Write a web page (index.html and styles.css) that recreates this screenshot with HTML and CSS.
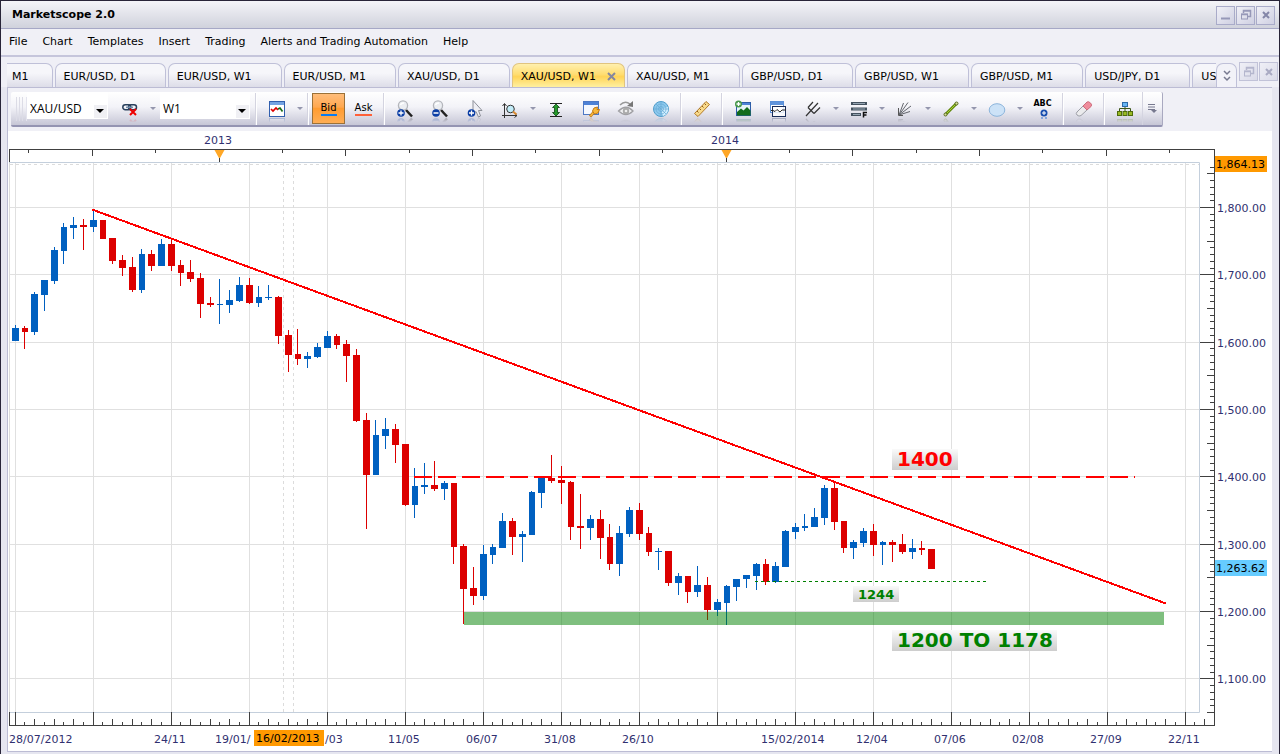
FILE: index.html
```html
<!DOCTYPE html>
<html lang="en">
<head>
<meta charset="utf-8">
<title>Marketscope 2.0</title>
<link rel="stylesheet" href="styles.css">
</head>
<body>
<div class="window">
  <header class="titlebar">
    <h1 class="title">Marketscope 2.0</h1>
    <div class="winbtns">
      <button class="winbtn" aria-label="Minimize"><svg width="12" height="12"><path d="M1 9.500H10" stroke="#9698b8" stroke-width="2"/></svg></button>
      <button class="winbtn" aria-label="Restore"><svg width="12" height="12"><path d="M3.500 4V1.500H10.500V7.500H8M3 2H11M1 5.500H8" fill="none" stroke="#9698b8" stroke-width="1.500"/><rect x="1.500" y="5" width="6" height="5" fill="none" stroke="#9698b8"/></svg></button>
      <button class="winbtn" aria-label="Close"><svg width="12" height="12"><path d="M3 3L9 9M9 3L3 9" stroke="#8486a8" stroke-width="2"/></svg></button>
    </div>
  </header>
  <nav class="menubar">
    <button>File</button><button>Chart</button><button>Templates</button><button>Insert</button><button>Trading</button><button>Alerts and Trading Automation</button><button>Help</button>
  </nav>
  <div class="tabrow">
    <div class="tabs">
      <button class="tab first">M1</button>
      <button class="tab">EUR/USD, D1</button>
      <button class="tab">EUR/USD, W1</button>
      <button class="tab">EUR/USD, M1</button>
      <button class="tab">XAU/USD, D1</button>
      <button class="tab active">XAU/USD, W1<svg class="tabx" width="9" height="9"><path d="M1 1L8 8M8 1L1 8" stroke="#8587a0" stroke-width="2"/></svg></button>
      <button class="tab">XAU/USD, M1</button>
      <button class="tab">GBP/USD, D1</button>
      <button class="tab">GBP/USD, W1</button>
      <button class="tab">GBP/USD, M1</button>
      <button class="tab">USD/JPY, D1</button>
      <button class="tab partial">US</button>
    </div>
    <button class="tab more" aria-label="More tabs"><svg width="10" height="12"><path d="M2 1L5 4L8 1M2 7L5 10L8 7" fill="none" stroke="#77798f" stroke-width="1.500"/></svg></button>
    <div class="winbtns faded">
      <button class="winbtn" aria-label="Restore chart"><svg width="12" height="12"><path d="M3.500 4V1.500H10.500V7.500H8M3 2H11M1 5.500H8" fill="none" stroke="#9698b8" stroke-width="1.500"/><rect x="1.500" y="5" width="6" height="5" fill="none" stroke="#9698b8"/></svg></button>
      <button class="winbtn" aria-label="Close chart"><svg width="12" height="12"><path d="M3 3L9 9M9 3L3 9" stroke="#8486a8" stroke-width="2"/></svg></button>
    </div>
  </div>
  <main class="content">
    <div class="toolstrip">
      <div class="toolbar">
        <span class="grip"></span>
        <label class="combo symbol"><select aria-label="Symbol"><option>XAU/USD</option></select></label>
        <button class="tool linkbtn" aria-label="Unlink"><svg width="18" height="18" class="refl"><g fill="none" stroke="#28405c" stroke-width="1.500"><rect x="1.800" y="4.800" width="8" height="5" rx="2.500"/><rect x="7.500" y="4.800" width="8" height="5" rx="2.500"/><path d="M5 7.300H12" stroke="#6f8aa8"/></g><path d="M9 9L15 15M15 9L9 15" stroke="#e00" stroke-width="2"/></svg></button>
        <button class="caret" aria-label="Link options"></button>
        <label class="combo period"><select aria-label="Period"><option>W1</option></select></label>
        <span class="sep"></span>
        <button class="tool" aria-label="Chart type"><svg width="18" height="18" class="refl"><rect x="1.500" y="1.500" width="15" height="15" fill="#fff" stroke="#315fae"/><rect x="2" y="2" width="14" height="3" fill="#74a3e2"/><path d="M3 9L5 11L8 8L10 10" fill="none" stroke="#d00" stroke-width="1.700"/><path d="M10 9L12 8L14.500 11.500" fill="none" stroke="#176a17" stroke-width="1.700"/></svg></button>
        <button class="caret" aria-label="Chart type options"></button>
        <span class="sep"></span>
        <button class="price bid on"><span>Bid</span></button>
        <button class="price ask"><span>Ask</span></button>
        <span class="sep"></span>
        <button class="tool" aria-label="Zoom in"><svg width="18" height="18" class="refl"><path d="M10 10L16 16.500" stroke="#222" stroke-width="2.500"/><circle cx="7" cy="5.500" r="4.600" fill="#eceef2" stroke="#b4b6bc" stroke-width="1.300"/><path d="M4.500 5Q5 3 8 3" stroke="#fff" stroke-width="1.500" fill="none"/><circle cx="5" cy="13" r="3.800" fill="#0b3ea5"/><path d="M2.500 13H7.500M5 10.500V15.500" stroke="#fff" stroke-width="1.300"/></svg></button>
        <button class="tool" aria-label="Zoom out"><svg width="18" height="18" class="refl"><path d="M10 10L16 16.500" stroke="#222" stroke-width="2.500"/><circle cx="7" cy="5.500" r="4.600" fill="#eceef2" stroke="#b4b6bc" stroke-width="1.300"/><path d="M4.500 5Q5 3 8 3" stroke="#fff" stroke-width="1.500" fill="none"/><circle cx="5" cy="13" r="3.800" fill="#0b3ea5"/><path d="M2.500 13H7.500" stroke="#fff" stroke-width="1.500"/></svg></button>
        <button class="tool" aria-label="Zoom cursor"><svg width="18" height="18" class="refl"><path d="M7 .5V14L10 11.500L12.500 17L14.500 16L12.500 10.500H16Z" fill="#eeeef3" stroke="#8d9099"/><circle cx="5.500" cy="13" r="3.800" fill="#0b3ea5"/><path d="M3 13H8M5.500 10.500V15.500" stroke="#fff" stroke-width="1.300"/></svg></button>
        <button class="tool" aria-label="Scale chart"><svg width="18" height="18"><path d="M3.500 4V15.500H16M1.500 6L3.500 3.500L5.500 6M13.500 13.500L16 15.500L13.500 17.500M1 15.500H3M3.500 15V18" stroke="#333" fill="none"/><circle cx="9.500" cy="9" r="3.800" fill="#c2ecf8" stroke="#333"/><path d="M12 11.500L15.500 14.500" stroke="#d88c34" stroke-width="2"/></svg></button>
        <button class="caret" aria-label="Scale options"></button>
        <button class="tool" aria-label="Fit height"><svg width="18" height="18"><path d="M3 3.500H15M3 16.500H15" stroke="#222"/><path d="M9 4L12.500 7.500H10.500V12.500H12.500L9 16L5.500 12.500H7.500V7.500H5.500Z" fill="#259a2b" stroke="#0a4210" stroke-width=".8"/></svg></button>
        <button class="tool" aria-label="Chart properties"><svg width="18" height="18" class="refl"><rect x="1.500" y="1.500" width="15" height="13" fill="#f5f8fe" stroke="#4d78c4"/><rect x="2" y="2" width="14" height="3" fill="#4e82d6"/><path d="M8 16.500L12 12" stroke="#c17a16" stroke-width="2.800"/><path d="M8.500 16L12 12" stroke="#f9b93b" stroke-width="1.500"/><path d="M10.500 11L12 8L15.500 7L15 9.500H17.500L16 13L12.500 14Z" fill="#f9b93b" stroke="#c17a16"/></svg></button>
        <button class="tool" aria-label="Show hidden"><svg width="18" height="18" class="refl"><path d="M1.500 11Q9 3.500 16 11Q9 18 1.500 11Z" fill="#f0f0f2" stroke="#a0a0a4" stroke-width="1.300"/><circle cx="9" cy="11" r="3.200" fill="#aaa"/><circle cx="9" cy="11" r="1.300" fill="#eee"/><path d="M3 5Q8 0 13 4" stroke="#999" fill="none" stroke-width="1.500"/><path d="M16 1V7L10 6Z" fill="#777"/></svg></button>
        <button class="tool" aria-label="Market radar"><svg width="18" height="18" class="refl"><circle cx="9" cy="9" r="7.500" fill="#8cc8ed" stroke="#4f9cca"/><path d="M9 9L16 7A7.500 7.500 0 0 1 11 16Z" fill="#d2efff"/><g fill="none" stroke="#67aad4" stroke-width=".7"><circle cx="9" cy="9" r="5"/><circle cx="9" cy="9" r="2.500"/><path d="M9 1.500V16.500M1.500 9H16.500M4 4L14 14"/></g></svg></button>
        <span class="sep"></span>
        <button class="tool" aria-label="Ruler"><svg width="18" height="18" class="refl"><path d="M1.500 13.500L13 1.500L16.500 4.500L5 16.500Z" fill="#f8da8c" stroke="#b27a28"/><path d="M4 11L5.500 12.500M6.500 8.500L8 10M9 6L10.500 7.500M11.500 3.500L13 5" stroke="#925e19"/></svg></button>
        <span class="sep"></span>
        <button class="tool" aria-label="Add image"><svg width="18" height="18" class="refl"><rect x="2.500" y="2.500" width="14" height="13" fill="#e5f4f8" stroke="#2c5da8"/><path d="M3 3H16V5H3Z" fill="#4e82d6"/><path d="M3 15.500V12L7 8.500L9.500 10.500L13 7L16.500 10.500V15.500Z" fill="#126b1b"/><circle cx="4.500" cy="4" r="3.500" fill="#46974a"/><path d="M2.500 4H6.500M4.500 2V6" stroke="#fff" stroke-width="1.300"/></svg></button>
        <button class="tool" aria-label="Add indicator"><svg width="18" height="18" class="refl"><rect x="1.500" y="1.500" width="13" height="11" fill="#fff" stroke="#5b91d9"/><rect x="2" y="2" width="12" height="3" fill="#5f94dc"/><rect x="3.500" y="6.500" width="13" height="10" fill="#fff" fill-opacity=".8" stroke="#172b58"/><path d="M2 10.500H4L6 11.500L8 9.500L11 12L13 10H17" fill="none" stroke="#222"/></svg></button>
        <button class="tool" aria-label="Pitchfork"><svg width="18" height="18" class="refl"><path d="M2 16L7 10.500L14 3M4 7.500L10 13.500M4 7.500L9 2M10 13.500L16 7.500" stroke="#333" fill="none" stroke-width="1.200"/></svg></button>
        <button class="caret" aria-label="Pitchfork options"></button>
        <button class="tool" aria-label="Fibonacci"><svg width="18" height="18"><path d="M1 3.500H17M1 9H17M1 14.500H11" stroke="#44525f" stroke-width="3"/><path d="M3 3.500H15M3 9H15M3 14.500H10" stroke="#95a5b2"/><path d="M13.500 17.500V12.500H17M13.500 15H16.500" stroke="#111" fill="none" stroke-width="1.500"/></svg></button>
        <button class="caret" aria-label="Fibonacci options"></button>
        <button class="tool" aria-label="Fan"><svg width="18" height="18" class="refl"><path d="M3 15L7.500 3M3 15L12 2.500M3 15L15 6M3 15L14 11.500" stroke="#62656b" fill="none"/><path d="M2.500 8V15.500H7" stroke="#555" fill="none"/></svg></button>
        <button class="caret" aria-label="Fan options"></button>
        <button class="tool" aria-label="Line"><svg width="18" height="18" class="refl"><path d="M3.500 14.500L14.500 3.500" stroke="#628a0b" stroke-width="3"/><path d="M3.500 14.500L14.500 3.500" stroke="#a9cf38"/><circle cx="3.500" cy="14.500" r="1.500" fill="#d7df9c" stroke="#56681c"/><circle cx="14.500" cy="3.500" r="1.500" fill="#d7df9c" stroke="#56681c"/></svg></button>
        <button class="caret" aria-label="Line options"></button>
        <button class="tool" aria-label="Ellipse"><svg width="18" height="18"><ellipse cx="9" cy="10" rx="7.800" ry="6.300" fill="#cce2f7" stroke="#8bb4db"/></svg></button>
        <button class="caret" aria-label="Ellipse options"></button>
        <button class="tool label" aria-label="Text label"><b>ABC</b><svg width="12" height="12"><circle cx="8" cy="5" r="3.500" fill="#174eae"/><path d="M6 5H10M8 3V7" stroke="#fff"/><path d="M6 11V9M10 11V9" stroke="#85a7dc" stroke-width="2"/></svg></button>
        <span class="sep"></span>
        <button class="tool" aria-label="Erase"><svg width="18" height="18" class="refl"><path d="M2 12L8 6L12 10L6 15.500Q4 17 2 15Q.5 13.500 2 12Z" fill="#ebebed" stroke="#9b9da5"/><path d="M8 6L12 2Q13.500 1 15.500 3Q17.500 5 16 6.500L12 10Z" fill="#ef8c9c" stroke="#cc6c7c"/></svg></button>
        <span class="sep"></span>
        <button class="tool" aria-label="Object tree"><svg width="18" height="18" class="refl"><path d="M9 6V9M3.500 11V8.500H14.500V11M9 8V12" stroke="#3e5818" fill="none"/><rect x="6.500" y="2.500" width="5" height="4" fill="#68b6f5" stroke="#2e6ba9"/><g fill="#9aba24" stroke="#4f6c0d"><rect x="1.500" y="11.500" width="4" height="4"/><rect x="7" y="11.500" width="4" height="4"/><rect x="12.500" y="11.500" width="4" height="4"/></g></svg></button>
        <button class="overflow" aria-label="Toolbar options"><svg width="12" height="12"><path d="M1 1.500H8M1 4H8M1 6.500H8" stroke="#77798f"/><path d="M4 7H10L7 10Z" fill="#77798f"/></svg></button>
      </div>
    </div>
    <svg id="chart" class="chart" viewBox="8 131 1264 620" role="img" aria-label="XAU/USD weekly candlestick chart">
      <defs><linearGradient id="tag" x1="0" y1="0" x2="0" y2="1"><stop offset="0" stop-color="#fafafa"/><stop offset="1" stop-color="#cdcdcd"/></linearGradient></defs>
      <g id="grid" class="grid"></g>
      <path class="cursor" d="M283.500 163V712M293.500 163V712M10 164.500H1199"/>
      <path class="frame" d="M9 162.500H1199.500V712.500H9"/>
      <path class="edge" d="M9.500 163V712"/>
      <path class="axis" d="M9.500 162V149.500H1214.500V725.500H9.500V712"/>
      <path id="ticks" class="axis"></path>
      <path class="marker" d="M214.500 150H224.500L219.500 159ZM721.500 150H731.500L726.500 159Z"/>
      <path class="axis" d="M219.500 158V162M726.500 158V162"/>
      <g id="candles" class="candles"></g>
      <rect class="zone" x="464" y="612" width="700" height="13"/>
      <path class="resistance" d="M414 477H1135"/>
      <path class="support" d="M755 581.500H986"/>
      <path class="trend" d="M92 209.500L1166 603.500"/>
      <g class="tagbox"><rect x="892" y="449" width="66" height="21"/><rect x="853" y="586" width="46" height="16"/><rect x="892" y="630" width="165" height="21"/></g>
      <text class="tag red" x="897" y="466">1400</text>
      <text class="tag small" x="858" y="599">1244</text>
      <text class="tag" x="897" y="647">1200 TO 1178</text>
      <g id="labels" class="labels"></g>
      <rect class="hot" x="254" y="730" width="70" height="16"/><text class="hottext" x="256" y="742">16/02/2013</text>
      <rect class="hot" x="1215" y="156" width="52" height="16"/><text class="hottext" x="1216" y="168">1,864.13</text>
      <rect class="last" x="1215" y="560" width="52" height="16"/><text class="hottext" x="1216" y="572">1,263.62</text>
    </svg>
  </main>
</div>
<script src="chart.js"></script>
</body>
</html>
```
FILE: styles.css
```css
* { box-sizing: border-box; }
body { margin: 0; background: #f0f0f6; color: #000; font: 11px/14px "DejaVu Sans", Verdana, sans-serif; }
button { margin: 0; padding: 0; border: 0; background: none; font: inherit; color: inherit; }
svg { display: block; }
.window { min-height: 100vh; border: 1px solid #282438; border-bottom: 0; background: #e6e6f0; display: flex; flex-direction: column; }
.titlebar { display: flex; align-items: center; justify-content: space-between; height: 28px; padding: 1px 4px 0 11px; background: linear-gradient(#f4f4f8, #d0d2dc); border-bottom: 1px solid #a6a8c6; }
.title { margin: 0; font-size: 11px; line-height: 14px; font-weight: bold; }
.winbtns { display: flex; gap: 1px; }
.winbtn { width: 19px; height: 19px; display: grid; place-items: center; border: 1px solid #a9abc9; background: linear-gradient(135deg, #f0f0f7, #cfd0e2); }
.menubar { display: flex; align-items: center; gap: 15px; height: 28px; padding: 0 8px 1px; background: #f0f0f6; border-bottom: 2px solid #c5c5db; }
.tabrow { display: flex; align-items: flex-end; height: 30px; padding-left: 6px; background: #efeff6; }
.tabs { flex: 1; min-width: 0; overflow: hidden; display: flex; gap: 2px; height: 24px; }
.tab { flex: none; display: flex; align-items: center; height: 24px; padding: 2px 29px 0 8px; border: 1px solid #bfc0d8; border-bottom: 0; border-radius: 7px 7px 0 0; background: linear-gradient(#f6f6fa 40%, #dddde8); white-space: nowrap; }
.tab.first { border-left: 0; border-radius: 0 7px 0 0; padding: 2px 23px 0 5px; }
.tab.active { padding-right: 8px; border-color: #e0c480; background: linear-gradient(#fff0ae, #ffdd72 45%, #ffd458 55%, #fff0a0); }
.tab.partial { flex: 1; min-width: 0; padding-right: 0; border-right: 0; border-radius: 7px 0 0 0; }
.tabx { margin-left: 11px; }
.tab.more { width: 21px; padding: 0; justify-content: center; background: #f2f2f8; }
.faded { align-self: flex-start; margin: 0 1px 0 2px; opacity: .65; padding-top: 5px; }
.content { flex: 1; margin: 0 7px 2px 6px; border: 1px solid #bcbcd4; border-width: 1px 0 1px 1px; background: #fff; }
.toolstrip { padding: 4px 0 4px 3px; background: #f0f0f6; }
.toolbar { display: flex; align-items: center; width: max-content; height: 35px; border-right: 1px solid #a9a9c0; border-bottom: 2px solid #9494b2; border-radius: 2px; background: linear-gradient(#fff, #f3f3f8 45%, #c6c6d6); }
.grip { width: 16px; height: 24px; background: repeating-linear-gradient(90deg, transparent 0 2px, #dcdce6 2px 3px) 3px 0 / 9px 100% no-repeat; border-right: 1px solid #e4e4ee; }
.combo { position: relative; align-self: flex-start; width: 81px; height: 27px; background: #fff; }
.combo select { appearance: none; width: 100%; height: 100%; padding: 6px 0 0 3px; border: 0; background: linear-gradient(#f0f0f4, #f0f0f4) right 1px bottom 1px / 13px 13px no-repeat; color: #000; font: 12px/16px "Open Sans", "Noto Sans", sans-serif; }
.combo::after { content: ""; position: absolute; right: 4px; top: 17px; border: 4px solid transparent; border-top-color: #000; border-bottom: 0; pointer-events: none; }
.combo.period { width: 90px; margin: 0 3px 0 2px; }
.tool { width: 35px; height: 33px; display: grid; place-items: center; }
.linkbtn { margin-left: 4px; }
.refl { -webkit-box-reflect: below -1px linear-gradient(transparent 70%, rgba(0, 0, 0, .35)); }
.caret { width: 11px; height: 33px; display: grid; place-items: center; }
.caret::before { content: ""; border: 3px solid transparent; border-top-color: #9496ad; border-bottom: 0; }
.sep { width: 6px; height: 32px; background: linear-gradient(90deg, transparent 2px, #d4d4e0 2px 3px, #fff 3px 4px, transparent 4px); }
.price { width: 33px; height: 31px; margin: 0 1px; font-size: 10px; line-height: 13px; }
.price span { display: inline-block; border-bottom: 2px solid #0a7cf0; }
.price.ask span { border-color: #ff6038; }
.price.on { border: 1px solid #9b7138; background: linear-gradient(#ffbd7b, #ffa850 45%, #ff9c32 50%, #ffae55); }
.tool.label { place-content: center; justify-items: center; padding-top: 1px; font-size: 8px; line-height: 9px; }
.overflow { width: 20px; height: 33px; display: grid; place-items: center; border-left: 1px solid #d4d4e0; }
.chart { width: 100%; height: auto; font: 11px "DejaVu Sans", Verdana, sans-serif; }
.grid { stroke: #e0e0e0; }
.cursor { stroke: #dcdcdc; stroke-dasharray: 3 3; fill: none; }
.frame { stroke: #c4cfdc; fill: none; }
.edge { stroke: #dcdcdc; }
.axis { stroke: #404040; fill: none; shape-rendering: crispEdges; }
.marker { fill: #ffa726; }
.candles { shape-rendering: crispEdges; }
.up { fill: #0060c0; }
.down { fill: #dc0000; }
.zone { fill: #008000; fill-opacity: .5; }
.resistance { stroke: #ff0000; stroke-width: 2; stroke-dasharray: 18 6; }
.support { stroke: #008000; stroke-dasharray: 3 3; }
.trend { stroke: #ff0000; stroke-width: 2; shape-rendering: crispEdges; }
.tagbox { fill: url(#tag); }
.tag { font-size: 20px; font-weight: bold; fill: #008000; }
.tag.red { fill: #ff0000; }
.tag.small { font-size: 13px; }
.labels { fill: #303070; }
.hot { fill: #ff9900; }
.last { fill: #66ccff; }
.hottext { fill: #000; }
```
FILE: chart.js
```js
const NS = "http://www.w3.org/2000/svg";
const STEP = 9.75;
const LEFT = 15;

function add(parent, name, attrs, text) {
  const el = document.createElementNS(NS, name);
  for (const key in attrs) el.setAttribute(key, attrs[key]);
  if (text) el.textContent = text;
  document.getElementById(parent).appendChild(el);
}

// Each bar: direction, high, body top, body bottom, low.
const bars = `U325,328,341,341 D326,328,332,349 U292,294,332,335 U280,280,295,311 U247,250,281,284
U223,227,251,264 U217,225,228,239 D219,225,227,250 U210,220,227,232 D220,220,239,239
D238,238,261,264 D255,260,268,276 D257,267,290,292 U249,254,290,293 D250,254,266,271
U239,244,266,266 D239,244,266,271 D260,265,273,286 D260,272,279,282 D273,278,304,318
D297,303,305,307 U279,304,305,324 U290,300,305,313 U277,285,301,302 D278,285,303,304
U286,297,303,307 U285,297,298,300 D296,297,336,344 D330,335,355,372 D329,354,359,365
U352,356,359,368 U343,347,357,358 U331,336,348,348 D334,336,345,349 D340,344,356,382
D349,355,421,422 D413,420,475,529 U420,435,475,475 U418,429,436,449 D424,429,445,463
D444,444,505,506 U468,486,505,518 U463,485,487,494 D461,485,489,491 U481,483,489,500
D483,483,547,564 D544,546,589,624 D567,588,596,605 U545,554,596,600 U544,547,555,564
U513,521,548,548 D518,521,537,555 U531,534,537,562 U491,492,535,535 U478,478,493,508
D455,478,481,483 D466,480,483,504 D481,482,527,540 D494,526,528,549 U515,519,528,540
D510,519,538,559 D524,537,564,570 U526,533,564,576 U507,510,534,537 D503,510,534,540
D527,533,552,556 U548,551,552,570 D551,551,583,586 U573,576,583,595 D576,576,592,603
U566,585,592,597 D577,585,610,620 U599,602,610,616 U585,586,603,625 U579,579,587,601
U575,575,579,588 U563,564,576,590 D559,564,582,585 U562,566,582,583 U530,531,567,567
U523,527,532,539 U514,526,528,531 U508,517,527,527 U485,488,518,525 D482,488,522,530
D521,521,548,553 U540,542,548,559 U528,531,543,547 D524,531,545,556 U541,542,545,565
D540,542,545,562 D534,544,552,554 U539,548,552,559 D541,548,550,555 D549,549,569,569`.split(/\s+/);

bars.forEach((bar, i) => {
  const [high, top, bottom, low] = bar.slice(1).split(",").map(Number);
  const cls = bar[0] === "U" ? "up" : "down";
  const x = Math.floor(LEFT + i * STEP);
  const narrow = i % 4 === 1;
  add("candles", "rect", { class: cls, x, y: high, width: 1, height: low - high });
  add("candles", "rect", { class: cls, x: narrow ? x - 2 : x - 3, y: top, width: narrow ? 6 : 7, height: bottom - top });
});

let grid = "";
let ticks = "";

for (let i = 0; i <= 122; i++) {
  const x = Math.floor(LEFT + i * STEP) + 0.5;
  if (i % 8 === 0) grid += `M${x} 163V712`;
  ticks += `M${x} 725v${i % 8 === 0 ? -13 : i % 2 === 0 ? -6 : -3}`;
}

for (let n = -6; n <= 75; n++) {
  const y = Math.floor(207.5 + n * 6.733) + 0.5;
  if (n % 10 === 0 && n >= 0) {
    grid += `M10 ${y}H1199`;
    const price = 1800 - n * 10;
    add("labels", "text", { x: 1217, y: y + 4.5 }, `1,${String(price).slice(1)}.00`);
  }
  ticks += `M1214 ${y}h${n % 10 === 0 ? -14 : n % 5 === 0 ? -7 : -4}`;
}

for (let n = -3; n <= 15; n++) {
  const x = Math.floor(219 + n * 63.37) + 0.5;
  ticks += `M${x} 150v${n % 2 === 0 ? 6 : 3}`;
}

add("grid", "path", { d: grid });
document.getElementById("ticks").setAttribute("d", ticks);

const dates = [[9, "28/07/2012"], [154, "24/11"], [215, "19/01/"], [325, "/03"], [388, "11/05"],
  [466, "06/07"], [544, "31/08"], [622, "26/10"], [761, "15/02/2014"], [856, "12/04"],
  [934, "07/06"], [1012, "02/08"], [1090, "27/09"], [1168, "22/11"]];
dates.forEach(([x, text]) => add("labels", "text", { x, y: 743 }, text));
add("labels", "text", { x: 204, y: 144 }, "2013");
add("labels", "text", { x: 711, y: 144 }, "2014");
```
